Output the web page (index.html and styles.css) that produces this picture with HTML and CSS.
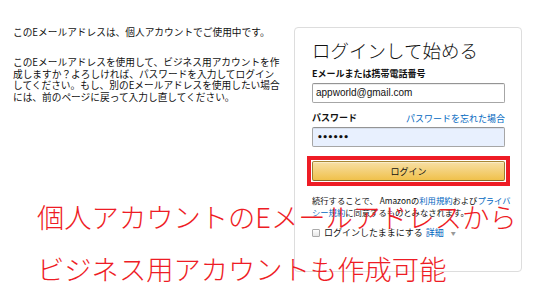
FILE: index.html
```html
<!DOCTYPE html>
<html lang="ja">
<head>
    <meta charset="UTF-8">
    <meta name="viewport" content="width=device-width, initial-scale=1.0">
    <title>ログイン</title>
    <link rel="stylesheet" href="styles.css">
</head>
<body>
    <div class="page">
        <div class="notice">
            <p class="notice-line">このEメールアドレスは、個人アカウントでご使用中です。</p>
            <p class="notice-text">
                このEメールアドレスを使用して、ビジネス用アカウントを作<br>成しますか？よろしければ、パスワードを入力してログイン<br>してください。もし、別のEメールアドレスを使用したい場合<br>には、前のページに戻って入力し直してください。
            </p>
        </div>

        <div class="login-card">
            <h1 class="login-title">ログインして始める</h1>

            <label class="field-label">Eメールまたは携帯電話番号</label>
            <div class="text-input">appworld@gmail.com</div>

            <div class="password-row">
                <label class="field-label">パスワード</label>
                <a class="link" href="#">パスワードを忘れた場合</a>
            </div>
            <div class="text-input autofill">&bull;&bull;&bull;&bull;&bull;&bull;</div>

            <div class="highlight">
                <button class="login-btn">ログイン</button>
            </div>

            <p class="terms">続行することで、 Amazonの<a class="link" href="#">利用規約</a>および<a class="link" href="#">プライバ<br>シー規約</a>に同意するものとみなされます。</p>

            <div class="remember">
                <span class="checkbox"></span>
                <span>ログインしたままにする</span>
                <a class="link" href="#">詳細</a>
                <span class="caret">▼</span>
            </div>
        </div>

        <div class="caption">
            <div>個人アカウントのEメールアドレスから</div>
            <div>ビジネス用アカウントも作成可能</div>
        </div>
    </div>
</body>
</html>
```

FILE: styles.css
```css
* {
    margin: 0;
    padding: 0;
    box-sizing: border-box;
}

body {
    font-family: 'Noto Sans CJK JP', 'Noto Sans', sans-serif;
    background: #fff;
    color: #111;
    width: 550px;
    height: 302px;
    overflow: hidden;
}

.page {
    position: relative;
    display: flex;
    align-items: flex-start;
    padding: 27px 0 0 13px;
}

.notice {
    width: 275px;
    font-size: 9.7px;
    line-height: 11.8px;
    white-space: nowrap;
}

.notice-line {
    margin-top: 0;
    margin-bottom: 18px;
}

.login-card {
    margin-left: 6px;
    width: 228px;
    height: 245px;
    border: 1px solid #ddd;
    border-radius: 4px;
    padding: 10px 16px 0 17px;
}

.login-title {
    font-size: 18.5px;
    font-weight: 300;
    line-height: 24px;
    margin-bottom: 5px;
}

.field-label {
    display: block;
    font-size: 9px;
    font-weight: 700;
    line-height: 14px;
}

.text-input {
    height: 20px;
    border: 1px solid #a6a6a6;
    border-top-color: #949494;
    border-radius: 2px;
    box-shadow: 0 1px 0 rgba(255, 255, 255, 0.5), 0 1px 0 rgba(0, 0, 0, 0.07) inset;
    font-family: 'Liberation Sans', Arial, sans-serif;
    font-size: 10px;
    line-height: 18px;
    padding: 0 3px;
    color: #111;
    margin-top: 2px;
}

.text-input.autofill {
    background: #e8f0fe;
    font-family: 'DejaVu Sans', sans-serif;
    font-size: 9px;
    font-weight: 700;
    letter-spacing: -0.5px;
    padding-left: 4px;
}

.password-row {
    display: flex;
    justify-content: space-between;
    align-items: center;
    margin-top: 8px;
}

.link {
    color: #0066c0;
    text-decoration: none;
    font-size: inherit;
}

.password-row .link {
    font-size: 9px;
}

.highlight {
    margin: 9px -5px 0 -5px;
    border: 4px solid #ee1c25;
    padding: 1px;
}

.login-btn {
    display: block;
    width: 100%;
    height: 20px;
    border: 1px solid #a88734;
    border-color: #a88734 #9c7e31 #846a29;
    border-radius: 2px;
    background: linear-gradient(to bottom, #f7dfa5, #f0c14b);
    font-family: 'Noto Sans CJK JP', sans-serif;
    font-size: 9px;
    color: #111;
    box-shadow: 0 1px 0 rgba(255, 255, 255, 0.4) inset;
}

.terms {
    margin-top: 9px;
    font-size: 8.3px;
    line-height: 11.5px;
    color: #111;
    white-space: nowrap;
}

.remember {
    display: flex;
    align-items: center;
    gap: 3px;
    margin-top: 8px;
    font-size: 9px;
}

.checkbox {
    width: 8px;
    height: 8px;
    border: 1px solid #aaa;
    border-radius: 1px;
    background: linear-gradient(#fff, #e6e6e6);
    margin-right: 1px;
}

.caret {
    color: #999;
    font-size: 5px;
    margin-left: 4px;
}

.caption {
    position: absolute;
    left: 37px;
    top: 190px;
    color: #ee1c25;
    font-size: 27.3px;
    font-weight: 300;
    line-height: 52px;
    white-space: nowrap;
}
```
